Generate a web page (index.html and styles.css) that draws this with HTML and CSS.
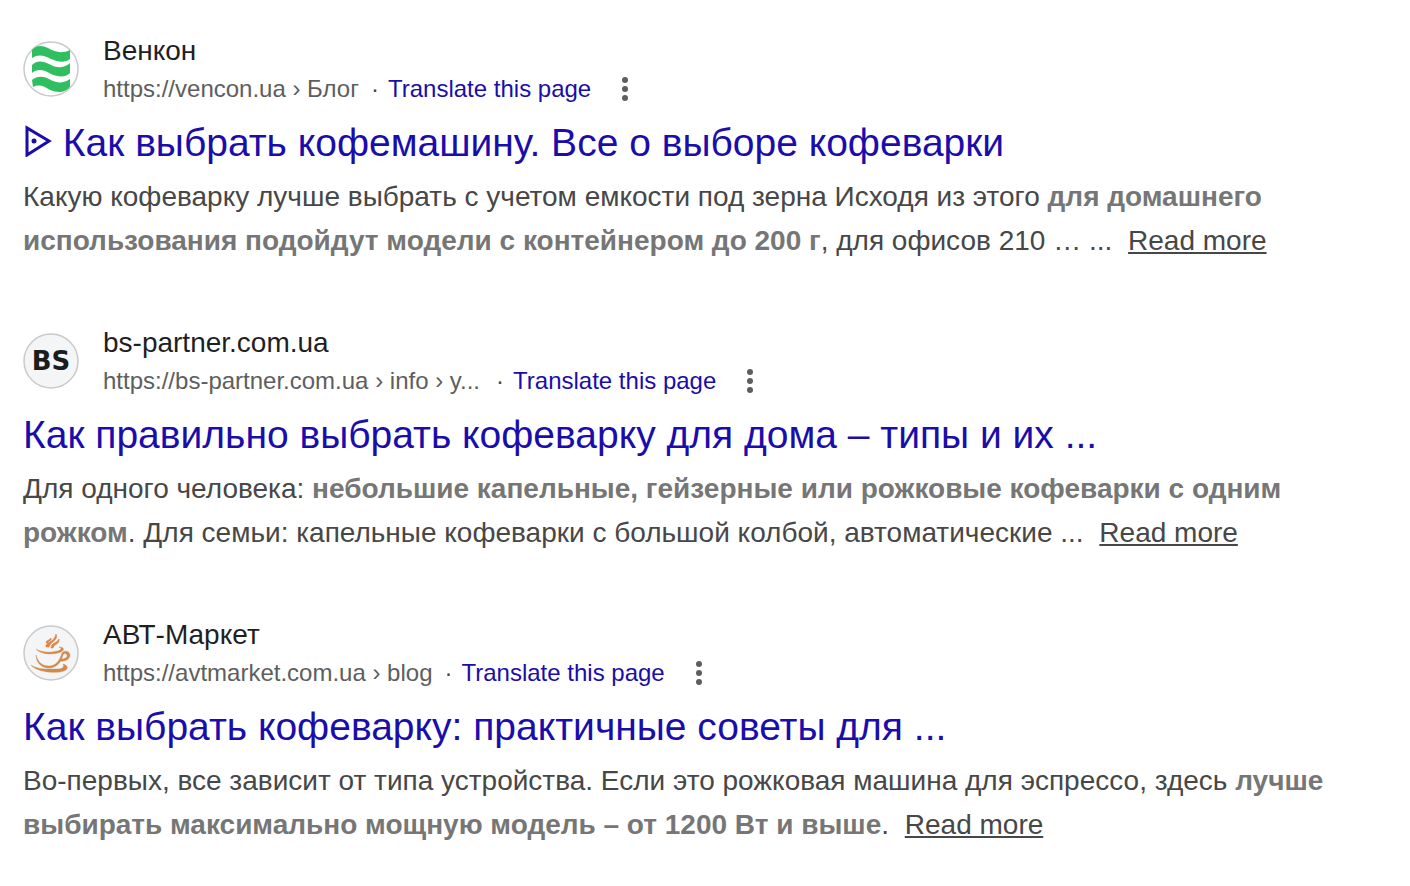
FILE: index.html
```html
<!DOCTYPE html>
<html lang="ru">
<head>
<meta charset="utf-8">
<title>Результаты поиска</title>
<link rel="stylesheet" href="styles.css">
</head>
<body>
<main class="results">
  <article class="result">
    <header class="source">
      <svg class="favicon" viewBox="0 0 56 56" aria-hidden="true">
        <circle cx="28" cy="28" r="27" fill="#fff" stroke="#cacaca" stroke-width="1.5"/>
        <g fill="#2fbf60">
          <path d="M9 9C13 4 19 4 25 7C32 11 39 13 47 9V18C42 22 35 21 28 18C21 14 15 13 9 17Z"/>
          <path d="M9 24C14 19 20 20 26 23C33 27 40 28 47 22V32C42 37 35 36 28 33C21 29 15 27 9 32Z"/>
          <path d="M9 39C14 35 20 35 26 38C33 42 40 43 47 38V46C42 52 35 52 27 49C21 45 16 43 10 46Z"/>
        </g>
      </svg>
      <div class="site">
        <div class="name">Венкон</div>
        <div class="meta"><cite class="url">https://vencon.ua › Блог</cite><span class="dot">·</span><a class="translate" href="#">Translate this page</a><button class="more" type="button" aria-label="About this result"><svg class="dots" viewBox="0 0 8 24"><circle cx="4" cy="3" r="3"/><circle cx="4" cy="12" r="3"/><circle cx="4" cy="21" r="3"/></svg></button></div>
      </div>
    </header>
    <h3 class="title"><a href="#"><svg class="marker" viewBox="0 0 29 32" aria-hidden="true"><path d="M4 3V30L26 16Z" fill="none" stroke="currentColor" stroke-width="3"/><circle cx="11" cy="16" r="2.5" fill="currentColor"/></svg> Как выбрать кофемашину. Все о выборе кофеварки</a></h3>
    <p class="snippet">Какую кофеварку лучше выбрать с учетом емкости под зерна Исходя из этого <em>для домашнего использования подойдут модели с контейнером до 200 г</em>, для офисов 210 … ... <a class="read" href="#">Read more</a></p>
  </article>
  <article class="result">
    <header class="source">
      <svg class="favicon" viewBox="0 0 56 56" aria-hidden="true">
        <circle cx="28" cy="28" r="27" fill="#f3f5f6" stroke="#cacaca" stroke-width="1.5"/>
        <text class="badge" x="28" y="37" text-anchor="middle">BS</text>
      </svg>
      <div class="site">
        <div class="name">bs-partner.com.ua</div>
        <div class="meta"><cite class="url clipped">https://bs-partner.com.ua › info › y...</cite><span class="dot">·</span><a class="translate" href="#">Translate this page</a><button class="more" type="button" aria-label="About this result"><svg class="dots" viewBox="0 0 8 24"><circle cx="4" cy="3" r="3"/><circle cx="4" cy="12" r="3"/><circle cx="4" cy="21" r="3"/></svg></button></div>
      </div>
    </header>
    <h3 class="title"><a href="#">Как правильно выбрать кофеварку для дома – типы и их ...</a></h3>
    <p class="snippet">Для одного человека: <em>небольшие капельные, гейзерные или рожковые кофеварки с одним рожком</em>. Для семьи: капельные кофеварки с большой колбой, автоматические ... <a class="read" href="#">Read more</a></p>
  </article>
  <article class="result">
    <header class="source">
      <svg class="favicon" viewBox="0 0 56 56" aria-hidden="true">
        <circle cx="28" cy="28" r="27" fill="#f3f5f6" stroke="#cacaca" stroke-width="1.5"/>
        <g fill="#d08a4e" stroke="#d08a4e" stroke-width=".4">
          <path d="M13 24C19 28 31 28 37 25C39 24 38 23 36 22C41 22 42 25 38 27C31 30 18 30 13 24Z"/>
          <path d="M13 30C15 38 20 41 26 41C33 41 37 35 39 28C41 25 47 26 47 30C47 34 42 37 37 36L38 34C42 34 45 32 44 30C43 28 41 28 40 30C38 38 33 43 26 43C18 43 13 37 13 30Z"/>
          <path d="M8 40C15 45 26 44 34 44C39 44 42 42 40 39C45 40 46 44 41 46C33 49 13 47 8 40Z"/>
        </g>
        <g fill="#dd8448" stroke="#dd8448" stroke-width=".6">
          <path d="M23 22C22 17 31 18 33 9C36 15 27 17 26 22Z"/>
          <path d="M28 23C28 18 34 18 36 14C37 19 31 19 30 23Z"/>
          <path d="M23 18C23 15 27 15 28 13C29 16 25 16 25 18Z"/>
        </g>
      </svg>
      <div class="site">
        <div class="name">АВТ-Маркет</div>
        <div class="meta"><cite class="url">https://avtmarket.com.ua › blog</cite><span class="dot">·</span><a class="translate" href="#">Translate this page</a><button class="more" type="button" aria-label="About this result"><svg class="dots" viewBox="0 0 8 24"><circle cx="4" cy="3" r="3"/><circle cx="4" cy="12" r="3"/><circle cx="4" cy="21" r="3"/></svg></button></div>
      </div>
    </header>
    <h3 class="title"><a href="#">Как выбрать кофеварку: практичные советы для ...</a></h3>
    <p class="snippet">Во-первых, все зависит от типа устройства. Если это рожковая машина для эспрессо, здесь <em>лучше выбирать максимально мощную модель – от 1200 Вт и выше</em>. <a class="read" href="#">Read more</a></p>
  </article>
</main>
</body>
</html>
```
FILE: styles.css
```css
body {
  margin: 0;
  background: #fff;
  color: #474747;
  font-family: "Liberation Sans", Arial, sans-serif;
}
.results {
  display: flex;
  flex-direction: column;
  gap: 60px;
  max-width: 1320px;
  padding: 31px 23px;
}
.source {
  display: flex;
  align-items: center;
  gap: 24px;
}
.favicon {
  flex: none;
  width: 56px;
  height: 56px;
}
.badge {
  fill: #1c1c1c;
  font-family: "DejaVu Sans", sans-serif;
  font-size: 26px;
  font-weight: 700;
}
.name {
  color: #1f1f1f;
  font-size: 28px;
  line-height: 40px;
}
.meta {
  display: flex;
  align-items: center;
  font-size: 24px;
  line-height: 36px;
}
.url {
  color: #5e5e5e;
  font-style: normal;
}
.clipped {
  padding-right: 4px;
}
.dot {
  margin: 0 9px 0 12px;
}
a {
  color: #1a0dab;
  text-decoration: none;
}
.more {
  display: flex;
  margin: 0 0 0 30px;
  padding: 0;
  border: 0;
  background: none;
}
.dots {
  width: 8px;
  height: 24px;
  fill: #5e5e5e;
}
.title {
  margin: 10px 0 0;
  font-size: 39px;
  font-weight: 400;
  line-height: 52px;
}
.marker {
  width: 29px;
  height: 32px;
  vertical-align: -1px;
}
.snippet {
  margin: 6px 0 0;
  font-size: 28px;
  line-height: 44px;
}
.snippet em {
  color: #767676;
  font-style: normal;
  font-weight: 700;
}
.snippet .read {
  margin-left: 8px;
  color: #474747;
  text-decoration: underline;
}
```
